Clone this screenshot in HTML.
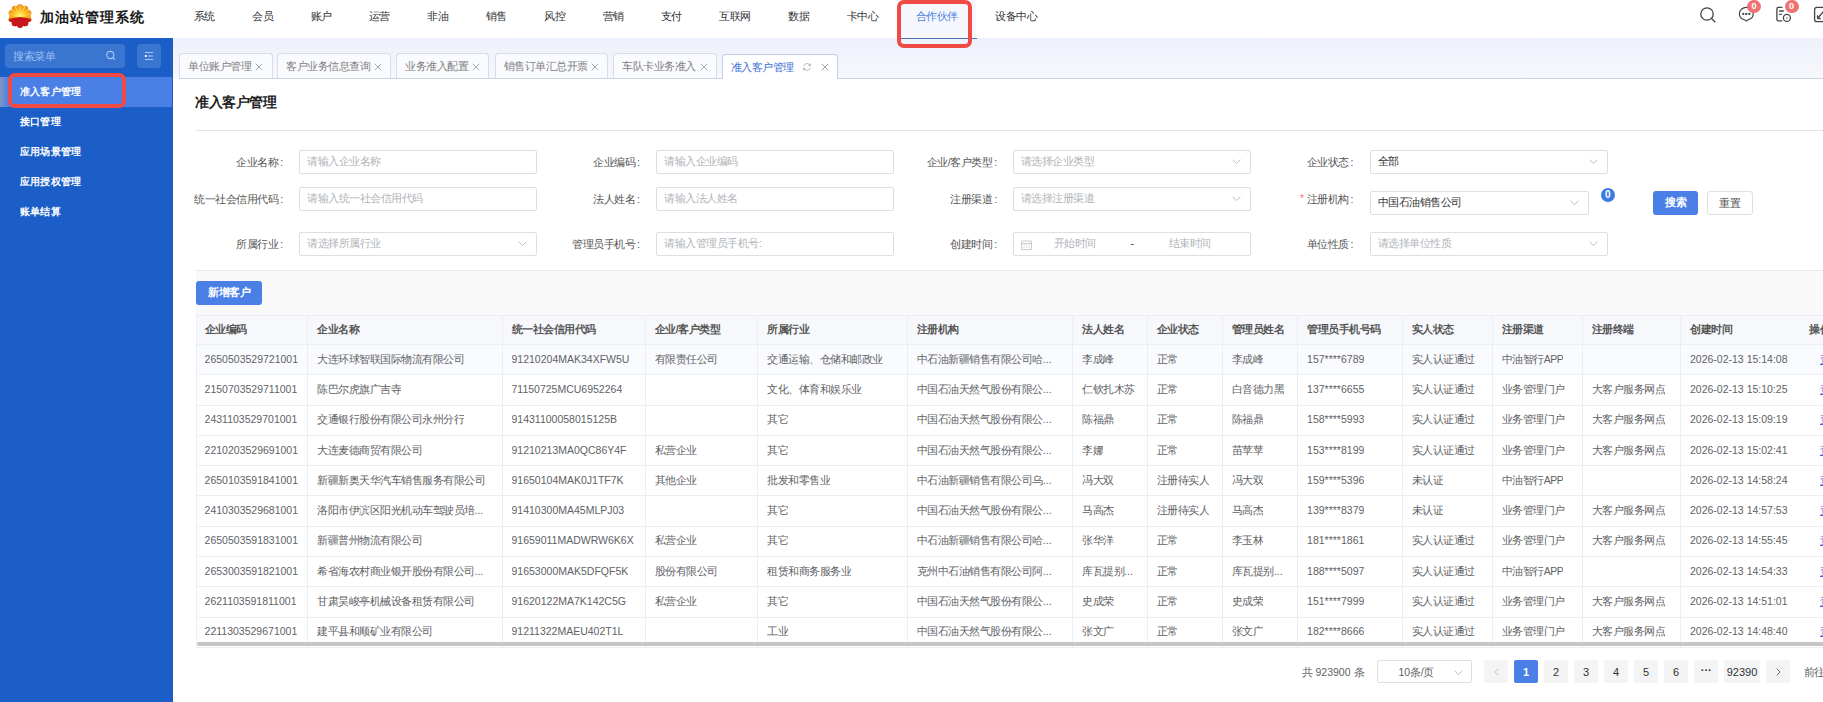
<!DOCTYPE html><html><head><meta charset="utf-8"><style>
*{box-sizing:border-box;margin:0;padding:0}
html,body{width:1823px;height:702px;overflow:hidden;background:#fff}
body{font-family:"Liberation Sans",sans-serif;font-size:10.5px;color:#606266;letter-spacing:-0.5px;position:relative}
.a{position:absolute;white-space:nowrap}
.num{letter-spacing:0}
#hdr{position:absolute;left:0;top:0;width:1823px;height:38px;background:#fff}
.nav{position:absolute;top:0;height:38px;line-height:32px;color:#303133;white-space:nowrap;text-align:center}
.nav.act{background:#f5f7fd;color:#4a7fdf}
#side{position:absolute;left:0;top:38px;width:173px;height:664px;background:#1b5ec7}
.mi{position:absolute;left:0;width:173px;height:30px;line-height:29px;padding-left:20px;color:#fff;font-weight:bold;white-space:nowrap;font-size:10px;letter-spacing:0.2px}
#tabs{position:absolute;left:173px;top:38px;width:1650px;height:41px;background:linear-gradient(#edf1fb,#f7f8fc)}
.tab{position:absolute;top:15px;height:26px;background:#fafbfe;border:1px solid #d8dde8;border-bottom:none;border-radius:4px 4px 0 0;line-height:24px;color:#808080;white-space:nowrap}
.tab.act{background:#fff;color:#3d73d8;border-color:#bfcde8}
.lbl{position:absolute;white-space:nowrap;color:#555;text-align:right;line-height:24px}
.inp{position:absolute;height:24px;border:1px solid #dcdfe6;border-radius:2px;background:#fff;line-height:21px;padding-left:7.3px;color:#b0b3b8;white-space:nowrap}
.inp.val{color:#333}
.chev{position:absolute;right:9px;top:8px;width:8px;height:5px}
.th{position:absolute;white-space:nowrap;font-weight:bold;color:#555;line-height:29px}
.td{position:absolute;white-space:nowrap;color:#606266;line-height:30px;overflow:hidden;text-overflow:ellipsis}
.pg{position:absolute;top:660px;width:24px;height:23px;background:#f4f4f5;border-radius:2px;text-align:center;line-height:24.5px;color:#303133;letter-spacing:0;font-size:11px}
</style></head><body>
<div id="hdr">
<svg class="a" style="left:8px;top:4px" width="24" height="24" viewBox="0 0 24 24">
<defs><clipPath id="lc"><circle cx="12" cy="12" r="9.2"/><circle cx="20.18" cy="14.66" r="3.3"/><circle cx="17.05" cy="18.96" r="3.3"/><circle cx="12.00" cy="20.60" r="3.3"/><circle cx="6.95" cy="18.96" r="3.3"/><circle cx="3.82" cy="14.66" r="3.3"/><circle cx="3.82" cy="9.34" r="3.3"/><circle cx="6.95" cy="5.04" r="3.3"/><circle cx="12.00" cy="3.40" r="3.3"/><circle cx="17.05" cy="5.04" r="3.3"/><circle cx="20.18" cy="9.34" r="3.3"/></clipPath>
<radialGradient id="lg" cx="12" cy="12.5" r="12" gradientUnits="userSpaceOnUse">
<stop offset="0" stop-color="#fffbe0"/><stop offset="0.2" stop-color="#ffe03a"/><stop offset="0.6" stop-color="#f8b21c"/><stop offset="1" stop-color="#f0901a"/></radialGradient></defs>
<g clip-path="url(#lc)">
<rect x="0" y="0" width="24" height="24" fill="url(#lg)"/>
<path d="M12 12.5 L12 0 M12 12.5 L6 0.5 M12 12.5 L18 0.5 M12 12.5 L1 4 M12 12.5 L23 4 M12 12.5 L0 9.5 M12 12.5 L24 9.5" stroke="#fff27a" stroke-width="0.8" opacity="0.7"/>
<path d="M0 15.5 Q12 10.5 24 15.5 L24 24 L0 24 Z" fill="#c9161d"/>
</g></svg>
<div class="a" style="left:40px;top:8px;font-size:14px;font-weight:bold;color:#1a1a1a;letter-spacing:1px;line-height:18px">加油站管理系统</div>
<div class="nav" style="left:175.00px;width:58.41px">系统</div>
<div class="nav" style="left:233.41px;width:58.41px">会员</div>
<div class="nav" style="left:291.82px;width:58.41px">账户</div>
<div class="nav" style="left:350.23px;width:58.41px">运营</div>
<div class="nav" style="left:408.64px;width:58.41px">非油</div>
<div class="nav" style="left:467.05px;width:58.41px">销售</div>
<div class="nav" style="left:525.46px;width:58.41px">风控</div>
<div class="nav" style="left:583.87px;width:58.41px">营销</div>
<div class="nav" style="left:642.28px;width:58.41px">支付</div>
<div class="nav" style="left:700.69px;width:68.91px">互联网</div>
<div class="nav" style="left:769.60px;width:58.41px">数据</div>
<div class="nav" style="left:828.01px;width:68.91px">卡中心</div>
<div class="nav act" style="left:896.92px;width:79.41px">合作伙伴</div>
<div class="nav" style="left:976.33px;width:79.41px">设备中心</div>
<svg class="a" style="left:1699px;top:5.5px" width="18" height="18" viewBox="0 0 18 18" fill="none" stroke="#444" stroke-width="1.3">
<circle cx="8" cy="8" r="6.2"/><path d="M12.5 12.5 L16.3 16.3"/></svg>
<svg class="a" style="left:1737px;top:5px" width="19" height="18" viewBox="0 0 19 18" fill="none" stroke="#444" stroke-width="1.2">
<path d="M9.3 16.1 L7.9 15 C4.8 14.3 2.4 11.8 2.4 8.8 C2.4 5.3 5.5 2.4 9.3 2.4 C13.1 2.4 16.2 5.3 16.2 8.8 C16.2 11.8 13.8 14.3 10.7 15 Z"/>
<circle cx="6.3" cy="8.9" r="0.55" fill="#444"/><circle cx="9.3" cy="8.9" r="0.55" fill="#444"/><circle cx="12.3" cy="8.9" r="0.55" fill="#444"/></svg>
<svg class="a" style="left:1774px;top:5px" width="18" height="18" viewBox="0 0 18 18" fill="none" stroke="#444" stroke-width="1.3">
<path d="M8.4 15.9 L4.3 15.9 Q2.9 15.9 2.9 14.5 L2.9 3.8 Q2.9 2.4 4.3 2.4 L8.4 2.4"/><path d="M5.2 6 L9.8 6 M5.2 9.3 L7.8 9.3"/>
<circle cx="12.9" cy="12.9" r="3.5"/><path d="M12.9 12.2 L12.9 13.6" stroke-width="1"/></svg>
<svg class="a" style="left:1812px;top:5px" width="18" height="18" viewBox="0 0 18 18" fill="none" stroke="#444" stroke-width="1.3">
<rect x="2.6" y="2.4" width="13" height="14.3" rx="2.2"/><path d="M5.5 13.5 L11.5 6.5 M5.5 13.5 L5.5 10.3 M5.5 13.5 L8.7 13.5"/></svg>
<div class="a" style="left:1747px;top:0px;width:14px;height:13px;border-radius:7px;background:#f07272;color:#fff;font-size:9px;line-height:13px;text-align:center;letter-spacing:0;font-weight:bold">0</div>
<div class="a" style="left:1784.5px;top:0px;width:14px;height:13px;border-radius:7px;background:#f07272;color:#fff;font-size:9px;line-height:13px;text-align:center;letter-spacing:0;font-weight:bold">0</div>
</div>
<div class="a" style="left:897px;top:-0.5px;width:75px;height:48px;border:4px solid #f04a45;border-radius:7px;z-index:20"></div>
<div id="side">
<div class="a" style="left:5px;top:6px;width:120px;height:24px;background:#3a76d0;border-radius:4px"></div>
<div class="a" style="left:13px;top:6px;line-height:24px;color:#9dc0f4">搜索菜单</div>
<svg class="a" style="left:104px;top:48px;position:fixed" width="13" height="13" viewBox="0 0 13 13" fill="none" stroke="#a9cbff" stroke-width="1.1">
<circle cx="6.3" cy="7" r="3.6"/><path d="M8.9 9.6 L10.9 11.6"/></svg>
<div class="a" style="left:137px;top:6px;width:24px;height:24px;background:#3a76d0;border-radius:4px"></div>
<svg class="a" style="left:144px;top:51px;position:fixed" width="10" height="10" viewBox="0 0 10 10" fill="none" stroke="#a9cbff" stroke-width="1">
<path d="M1 1.5 L9 1.5 M4 5 L9 5 M1 8.5 L9 8.5"/><rect x="0.8" y="4" width="2.2" height="2" fill="#d8e8ff" stroke="none"/></svg>
<div class="mi" style="top:39px;background:linear-gradient(90deg,#7f97bf 0px,#4a80e6 8px)">准入客户管理</div>
<div class="mi" style="top:69px">接口管理</div>
<div class="mi" style="top:99px">应用场景管理</div>
<div class="mi" style="top:129px">应用授权管理</div>
<div class="mi" style="top:159px">账单结算</div>
</div>
<div class="a" style="left:8px;top:73px;width:117.5px;height:35px;border:4px solid #f04a45;border-radius:7px;z-index:20"></div>
<div class="a" style="left:172px;top:38px;width:1px;height:664px;background:#2a5aa8"></div>
<div id="tabs"></div>
<div class="a" style="left:179px;top:78px;width:1644px;height:1px;background:#cbd3e4"></div>
<div class="a" style="left:897px;top:38px;width:80px;height:1px;background:#4a6fb8"></div>
<div class="tab" style="left:179px;width:93.6px;top:53px;height:25px"><span class="a" style="left:8px;top:0">单位账户管理</span><svg class="a" style="left:75.1px;top:9px" width="8" height="8" viewBox="0 0 8 8" stroke="#a0a0a0" stroke-width="0.9"><path d="M0.8 0.8 L7.2 7.2 M7.2 0.8 L0.8 7.2"/></svg></div>
<div class="tab" style="left:277.3px;width:114.1px;top:53px;height:25px"><span class="a" style="left:8px;top:0">客户业务信息查询</span><svg class="a" style="left:95.6px;top:9px" width="8" height="8" viewBox="0 0 8 8" stroke="#a0a0a0" stroke-width="0.9"><path d="M0.8 0.8 L7.2 7.2 M7.2 0.8 L0.8 7.2"/></svg></div>
<div class="tab" style="left:396.3px;width:93.2px;top:53px;height:25px"><span class="a" style="left:8px;top:0">业务准入配置</span><svg class="a" style="left:74.7px;top:9px" width="8" height="8" viewBox="0 0 8 8" stroke="#a0a0a0" stroke-width="0.9"><path d="M0.8 0.8 L7.2 7.2 M7.2 0.8 L0.8 7.2"/></svg></div>
<div class="tab" style="left:494.5px;width:113.8px;top:53px;height:25px"><span class="a" style="left:8px;top:0">销售订单汇总开票</span><svg class="a" style="left:95.3px;top:9px" width="8" height="8" viewBox="0 0 8 8" stroke="#a0a0a0" stroke-width="0.9"><path d="M0.8 0.8 L7.2 7.2 M7.2 0.8 L0.8 7.2"/></svg></div>
<div class="tab" style="left:613.4px;width:103.9px;top:53px;height:25px"><span class="a" style="left:8px;top:0">车队卡业务准入</span><svg class="a" style="left:85.4px;top:9px" width="8" height="8" viewBox="0 0 8 8" stroke="#a0a0a0" stroke-width="0.9"><path d="M0.8 0.8 L7.2 7.2 M7.2 0.8 L0.8 7.2"/></svg></div>
<div class="tab act" style="left:722.4px;width:115.5px;top:54px;height:25px"><span class="a" style="left:7.5px;top:-0.5px">准入客户管理</span><svg class="a" style="left:79px;top:7px" width="10" height="10" viewBox="0 0 10 10" fill="none" stroke="#b0b4ba" stroke-width="0.9"><path d="M8.3 3.5 A3.6 3.6 0 0 0 1.6 4.2 M1.7 6.5 A3.6 3.6 0 0 0 8.4 5.8"/><path d="M8.6 1.6 L8.4 3.7 L6.4 3.4 M1.4 8.4 L1.6 6.3 L3.6 6.6"/></svg><svg class="a" style="left:97.5px;top:8px" width="8" height="8" viewBox="0 0 8 8" stroke="#999" stroke-width="0.9"><path d="M0.8 0.8 L7.2 7.2 M7.2 0.8 L0.8 7.2"/></svg></div>
<div class="a" style="left:195px;top:94px;font-size:13.5px;font-weight:bold;color:#222;line-height:18px">准入客户管理</div>
<div class="a" style="left:196px;top:129.5px;width:1627px;height:1px;background:#e0e4ea"></div>
<div class="lbl" style="right:1540.4px;top:149.5px">企业名称<span style="margin-left:2px">:</span></div>
<div class="inp" style="left:299.2px;top:150.3px;width:238px;height:23.5px">请输入企业名称</div>
<div class="lbl" style="right:1183.5px;top:149.5px">企业编码<span style="margin-left:2px">:</span></div>
<div class="inp" style="left:656.2px;top:150.3px;width:238px;height:23.5px">请输入企业编码</div>
<div class="lbl" style="right:826.4px;top:149.5px">企业/客户类型<span style="margin-left:2px">:</span></div>
<div class="inp" style="left:1012.5px;top:150.3px;width:238px;height:23.5px">请选择企业类型<svg class="a" style="right:9px;top:8px" width="9" height="6" viewBox="0 0 9 6" fill="none" stroke="#b8bcc4" stroke-width="1"><path d="M0.6 0.8 L4.5 4.6 L8.4 0.8"/></svg></div>
<div class="lbl" style="right:470.0px;top:149.5px">企业状态<span style="margin-left:2px">:</span></div>
<div class="inp val" style="left:1369.5px;top:150.3px;width:238px;height:23.5px">全部<svg class="a" style="right:9px;top:8px" width="9" height="6" viewBox="0 0 9 6" fill="none" stroke="#b8bcc4" stroke-width="1"><path d="M0.6 0.8 L4.5 4.6 L8.4 0.8"/></svg></div>
<div class="lbl" style="right:1540.4px;top:186.5px">统一社会信用代码<span style="margin-left:2px">:</span></div>
<div class="inp" style="left:299.2px;top:187.3px;width:238px;height:23.5px">请输入统一社会信用代码</div>
<div class="lbl" style="right:1183.5px;top:186.5px">法人姓名<span style="margin-left:2px">:</span></div>
<div class="inp" style="left:656.2px;top:187.3px;width:238px;height:23.5px">请输入法人姓名</div>
<div class="lbl" style="right:826.4px;top:186.5px">注册渠道<span style="margin-left:2px">:</span></div>
<div class="inp" style="left:1012.5px;top:187.3px;width:238px;height:23.5px">请选择注册渠道<svg class="a" style="right:9px;top:8px" width="9" height="6" viewBox="0 0 9 6" fill="none" stroke="#b8bcc4" stroke-width="1"><path d="M0.6 0.8 L4.5 4.6 L8.4 0.8"/></svg></div>
<div class="lbl" style="right:470.0px;top:186.5px">注册机构<span style="margin-left:2px">:</span></div>
<div class="inp val" style="left:1369.5px;top:191.2px;width:219.5px;height:23.5px">中国石油销售公司<svg class="a" style="right:9px;top:8px" width="9" height="6" viewBox="0 0 9 6" fill="none" stroke="#b8bcc4" stroke-width="1"><path d="M0.6 0.8 L4.5 4.6 L8.4 0.8"/></svg></div>
<div class="a" style="left:1300px;top:193px;color:#f56c6c;font-size:10px;line-height:12px;letter-spacing:0">*</div>
<div class="a" style="left:1601px;top:188px;width:13.5px;height:13.5px;border-radius:7px;background:#3d7be0;color:#fff;font-size:10px;line-height:13.5px;text-align:center;letter-spacing:0;font-weight:bold">0</div>
<div class="a" style="left:1653px;top:191.3px;width:45px;height:23.5px;background:#4a80e6;border-radius:3px;color:#fff;text-align:center;line-height:23.5px;font-weight:bold">搜索</div>
<div class="a" style="left:1707.3px;top:191.3px;width:45.3px;height:23.5px;background:#fff;border:1px solid #dcdfe6;border-radius:3px;color:#555;text-align:center;line-height:22.5px">重置</div>
<div class="lbl" style="right:1540.4px;top:231.5px">所属行业<span style="margin-left:2px">:</span></div>
<div class="inp" style="left:299.2px;top:232.3px;width:238px;height:23.5px">请选择所属行业<svg class="a" style="right:9px;top:8px" width="9" height="6" viewBox="0 0 9 6" fill="none" stroke="#b8bcc4" stroke-width="1"><path d="M0.6 0.8 L4.5 4.6 L8.4 0.8"/></svg></div>
<div class="lbl" style="right:1183.5px;top:231.5px">管理员手机号<span style="margin-left:2px">:</span></div>
<div class="inp" style="left:656.2px;top:232.3px;width:238px;height:23.5px">请输入管理员手机号:</div>
<div class="lbl" style="right:826.4px;top:231.5px">创建时间<span style="margin-left:2px">:</span></div>
<div class="inp" style="left:1012.5px;top:232.3px;width:238px;height:23.5px"><svg class="a" style="left:7px;top:6.5px" width="11" height="10" viewBox="0 0 11 10" fill="none" stroke="#c0c4cc" stroke-width="0.9"><rect x="0.5" y="1" width="10" height="8.5" rx="0.5"/><path d="M0.5 3.5 L10.5 3.5 M2.5 5.3 L3.5 5.3 M5 5.3 L6 5.3 M7.5 5.3 L8.5 5.3 M2.5 7.3 L3.5 7.3 M5 7.3 L6 7.3 M7.5 7.3 L8.5 7.3"/></svg><span class="a" style="left:40px;top:0">开始时间</span><span class="a" style="left:117px;top:0;color:#333">-</span><span class="a" style="left:155px;top:0">结束时间</span></div>
<div class="lbl" style="right:470.0px;top:231.5px">单位性质<span style="margin-left:2px">:</span></div>
<div class="inp" style="left:1369.5px;top:232.3px;width:238px;height:23.5px">请选择单位性质<svg class="a" style="right:9px;top:8px" width="9" height="6" viewBox="0 0 9 6" fill="none" stroke="#b8bcc4" stroke-width="1"><path d="M0.6 0.8 L4.5 4.6 L8.4 0.8"/></svg></div>
<div class="a" style="left:196px;top:270px;width:1627px;height:45px;background:#f9f9f9;border-top:1px solid #e9e9e9"></div>
<div class="a" style="left:196.2px;top:281.2px;width:65.8px;height:23.6px;background:#4a80e6;border-radius:3px;color:#fff;text-align:center;line-height:23.6px;font-weight:bold">新增客户</div>
<div class="a" style="left:196.6px;top:315px;width:1627px;height:30px;background:#f6f8fc;border-top:1px solid #ebeef5;border-bottom:1px solid #ebeef5"></div>
<div class="a" style="left:196.6px;top:345px;width:1627px;height:28.68px;background:#fafbfe"></div>
<div class="a" style="left:196.6px;top:374.28px;width:1627px;height:1px;background:#ebeef5"></div>
<div class="a" style="left:196.6px;top:404.56px;width:1627px;height:1px;background:#ebeef5"></div>
<div class="a" style="left:196.6px;top:434.84px;width:1627px;height:1px;background:#ebeef5"></div>
<div class="a" style="left:196.6px;top:465.12px;width:1627px;height:1px;background:#ebeef5"></div>
<div class="a" style="left:196.6px;top:495.40px;width:1627px;height:1px;background:#ebeef5"></div>
<div class="a" style="left:196.6px;top:525.68px;width:1627px;height:1px;background:#ebeef5"></div>
<div class="a" style="left:196.6px;top:555.96px;width:1627px;height:1px;background:#ebeef5"></div>
<div class="a" style="left:196.6px;top:586.24px;width:1627px;height:1px;background:#ebeef5"></div>
<div class="a" style="left:196.6px;top:616.52px;width:1627px;height:1px;background:#ebeef5"></div>
<div class="a" style="left:196.6px;top:646.80px;width:1627px;height:1px;background:#ebeef5"></div>
<div class="a" style="left:196.1px;top:315px;width:1px;height:333px;background:#ebeef5"></div>
<div class="a" style="left:307.0px;top:315px;width:1px;height:333px;background:#ebeef5"></div>
<div class="a" style="left:501.5px;top:315px;width:1px;height:333px;background:#ebeef5"></div>
<div class="a" style="left:644.7px;top:315px;width:1px;height:333px;background:#ebeef5"></div>
<div class="a" style="left:757.0px;top:315px;width:1px;height:333px;background:#ebeef5"></div>
<div class="a" style="left:906.8px;top:315px;width:1px;height:333px;background:#ebeef5"></div>
<div class="a" style="left:1072.1px;top:315px;width:1px;height:333px;background:#ebeef5"></div>
<div class="a" style="left:1146.8px;top:315px;width:1px;height:333px;background:#ebeef5"></div>
<div class="a" style="left:1221.9px;top:315px;width:1px;height:333px;background:#ebeef5"></div>
<div class="a" style="left:1297.1px;top:315px;width:1px;height:333px;background:#ebeef5"></div>
<div class="a" style="left:1401.9px;top:315px;width:1px;height:333px;background:#ebeef5"></div>
<div class="a" style="left:1491.8px;top:315px;width:1px;height:333px;background:#ebeef5"></div>
<div class="a" style="left:1581.9px;top:315px;width:1px;height:333px;background:#ebeef5"></div>
<div class="a" style="left:1680.0px;top:315px;width:1px;height:333px;background:#ebeef5"></div>
<div class="th" style="left:204.6px;top:314.5px">企业编码</div>
<div class="th" style="left:317.0px;top:314.5px">企业名称</div>
<div class="th" style="left:511.5px;top:314.5px">统一社会信用代码</div>
<div class="th" style="left:654.7px;top:314.5px">企业/客户类型</div>
<div class="th" style="left:767.0px;top:314.5px">所属行业</div>
<div class="th" style="left:916.8px;top:314.5px">注册机构</div>
<div class="th" style="left:1082.1px;top:314.5px">法人姓名</div>
<div class="th" style="left:1156.8px;top:314.5px">企业状态</div>
<div class="th" style="left:1231.9px;top:314.5px">管理员姓名</div>
<div class="th" style="left:1307.1px;top:314.5px">管理员手机号码</div>
<div class="th" style="left:1411.9px;top:314.5px">实人状态</div>
<div class="th" style="left:1501.8px;top:314.5px">注册渠道</div>
<div class="th" style="left:1591.9px;top:314.5px">注册终端</div>
<div class="th" style="left:1690.0px;top:314.5px">创建时间</div>
<div class="th" style="left:1809.0px;top:314.5px">操作</div>
<div class="td num" style="left:204.6px;top:343.80px">2650503529721001</div>
<div class="td" style="left:317.0px;top:343.80px">大连环球智联国际物流有限公司</div>
<div class="td num" style="left:511.5px;top:343.80px">91210204MAK34XFW5U</div>
<div class="td" style="left:654.7px;top:343.80px">有限责任公司</div>
<div class="td" style="left:767.0px;top:343.80px">交通运输、仓储和邮政业</div>
<div class="td" style="left:916.8px;top:343.80px">中石油新疆销售有限公司哈<span class="num">...</span></div>
<div class="td" style="left:1082.1px;top:343.80px">李成峰</div>
<div class="td" style="left:1156.8px;top:343.80px">正常</div>
<div class="td" style="left:1231.9px;top:343.80px">李成峰</div>
<div class="td num" style="left:1307.1px;top:343.80px">157****6789</div>
<div class="td" style="left:1411.9px;top:343.80px">实人认证通过</div>
<div class="td" style="left:1501.8px;top:343.80px">中油智行APP</div>
<div class="td num" style="left:1690.0px;top:343.80px">2026-02-13 15:14:08</div>
<div class="td" style="left:1820px;top:343.80px;color:#4a5fd8;text-decoration:underline">查看</div>
<div class="td num" style="left:204.6px;top:374.08px">2150703529711001</div>
<div class="td" style="left:317.0px;top:374.08px">陈巴尔虎旗广吉寺</div>
<div class="td num" style="left:511.5px;top:374.08px">71150725MCU6952264</div>
<div class="td" style="left:767.0px;top:374.08px">文化、体育和娱乐业</div>
<div class="td" style="left:916.8px;top:374.08px">中国石油天然气股份有限公<span class="num">...</span></div>
<div class="td" style="left:1082.1px;top:374.08px">仁钦扎木苏</div>
<div class="td" style="left:1156.8px;top:374.08px">正常</div>
<div class="td" style="left:1231.9px;top:374.08px">白音德力黑</div>
<div class="td num" style="left:1307.1px;top:374.08px">137****6655</div>
<div class="td" style="left:1411.9px;top:374.08px">实人认证通过</div>
<div class="td" style="left:1501.8px;top:374.08px">业务管理门户</div>
<div class="td" style="left:1591.9px;top:374.08px">大客户服务网点</div>
<div class="td num" style="left:1690.0px;top:374.08px">2026-02-13 15:10:25</div>
<div class="td" style="left:1820px;top:374.08px;color:#4a5fd8;text-decoration:underline">查看</div>
<div class="td num" style="left:204.6px;top:404.36px">2431103529701001</div>
<div class="td" style="left:317.0px;top:404.36px">交通银行股份有限公司永州分行</div>
<div class="td num" style="left:511.5px;top:404.36px">91431100058015125B</div>
<div class="td" style="left:767.0px;top:404.36px">其它</div>
<div class="td" style="left:916.8px;top:404.36px">中国石油天然气股份有限公<span class="num">...</span></div>
<div class="td" style="left:1082.1px;top:404.36px">陈福鼎</div>
<div class="td" style="left:1156.8px;top:404.36px">正常</div>
<div class="td" style="left:1231.9px;top:404.36px">陈福鼎</div>
<div class="td num" style="left:1307.1px;top:404.36px">158****5993</div>
<div class="td" style="left:1411.9px;top:404.36px">实人认证通过</div>
<div class="td" style="left:1501.8px;top:404.36px">业务管理门户</div>
<div class="td" style="left:1591.9px;top:404.36px">大客户服务网点</div>
<div class="td num" style="left:1690.0px;top:404.36px">2026-02-13 15:09:19</div>
<div class="td" style="left:1820px;top:404.36px;color:#4a5fd8;text-decoration:underline">查看</div>
<div class="td num" style="left:204.6px;top:434.64px">2210203529691001</div>
<div class="td" style="left:317.0px;top:434.64px">大连麦德商贸有限公司</div>
<div class="td num" style="left:511.5px;top:434.64px">91210213MA0QC86Y4F</div>
<div class="td" style="left:654.7px;top:434.64px">私营企业</div>
<div class="td" style="left:767.0px;top:434.64px">其它</div>
<div class="td" style="left:916.8px;top:434.64px">中国石油天然气股份有限公<span class="num">...</span></div>
<div class="td" style="left:1082.1px;top:434.64px">李娜</div>
<div class="td" style="left:1156.8px;top:434.64px">正常</div>
<div class="td" style="left:1231.9px;top:434.64px">苗苹苹</div>
<div class="td num" style="left:1307.1px;top:434.64px">153****8199</div>
<div class="td" style="left:1411.9px;top:434.64px">实人认证通过</div>
<div class="td" style="left:1501.8px;top:434.64px">业务管理门户</div>
<div class="td" style="left:1591.9px;top:434.64px">大客户服务网点</div>
<div class="td num" style="left:1690.0px;top:434.64px">2026-02-13 15:02:41</div>
<div class="td" style="left:1820px;top:434.64px;color:#4a5fd8;text-decoration:underline">查看</div>
<div class="td num" style="left:204.6px;top:464.92px">2650103591841001</div>
<div class="td" style="left:317.0px;top:464.92px">新疆新奥天华汽车销售服务有限公司</div>
<div class="td num" style="left:511.5px;top:464.92px">91650104MAK0J1TF7K</div>
<div class="td" style="left:654.7px;top:464.92px">其他企业</div>
<div class="td" style="left:767.0px;top:464.92px">批发和零售业</div>
<div class="td" style="left:916.8px;top:464.92px">中石油新疆销售有限公司乌<span class="num">...</span></div>
<div class="td" style="left:1082.1px;top:464.92px">冯大双</div>
<div class="td" style="left:1156.8px;top:464.92px">注册待实人</div>
<div class="td" style="left:1231.9px;top:464.92px">冯大双</div>
<div class="td num" style="left:1307.1px;top:464.92px">159****5396</div>
<div class="td" style="left:1411.9px;top:464.92px">未认证</div>
<div class="td" style="left:1501.8px;top:464.92px">中油智行APP</div>
<div class="td num" style="left:1690.0px;top:464.92px">2026-02-13 14:58:24</div>
<div class="td" style="left:1820px;top:464.92px;color:#4a5fd8;text-decoration:underline">查看</div>
<div class="td num" style="left:204.6px;top:495.20px">2410303529681001</div>
<div class="td" style="left:317.0px;top:495.20px">洛阳市伊滨区阳光机动车驾驶员培<span class="num">...</span></div>
<div class="td num" style="left:511.5px;top:495.20px">91410300MA45MLPJ03</div>
<div class="td" style="left:767.0px;top:495.20px">其它</div>
<div class="td" style="left:916.8px;top:495.20px">中国石油天然气股份有限公<span class="num">...</span></div>
<div class="td" style="left:1082.1px;top:495.20px">马高杰</div>
<div class="td" style="left:1156.8px;top:495.20px">注册待实人</div>
<div class="td" style="left:1231.9px;top:495.20px">马高杰</div>
<div class="td num" style="left:1307.1px;top:495.20px">139****8379</div>
<div class="td" style="left:1411.9px;top:495.20px">未认证</div>
<div class="td" style="left:1501.8px;top:495.20px">业务管理门户</div>
<div class="td" style="left:1591.9px;top:495.20px">大客户服务网点</div>
<div class="td num" style="left:1690.0px;top:495.20px">2026-02-13 14:57:53</div>
<div class="td" style="left:1820px;top:495.20px;color:#4a5fd8;text-decoration:underline">查看</div>
<div class="td num" style="left:204.6px;top:525.48px">2650503591831001</div>
<div class="td" style="left:317.0px;top:525.48px">新疆普州物流有限公司</div>
<div class="td num" style="left:511.5px;top:525.48px">91659011MADWRW6K6X</div>
<div class="td" style="left:654.7px;top:525.48px">私营企业</div>
<div class="td" style="left:767.0px;top:525.48px">其它</div>
<div class="td" style="left:916.8px;top:525.48px">中石油新疆销售有限公司哈<span class="num">...</span></div>
<div class="td" style="left:1082.1px;top:525.48px">张华洋</div>
<div class="td" style="left:1156.8px;top:525.48px">正常</div>
<div class="td" style="left:1231.9px;top:525.48px">李玉林</div>
<div class="td num" style="left:1307.1px;top:525.48px">181****1861</div>
<div class="td" style="left:1411.9px;top:525.48px">实人认证通过</div>
<div class="td" style="left:1501.8px;top:525.48px">业务管理门户</div>
<div class="td" style="left:1591.9px;top:525.48px">大客户服务网点</div>
<div class="td num" style="left:1690.0px;top:525.48px">2026-02-13 14:55:45</div>
<div class="td" style="left:1820px;top:525.48px;color:#4a5fd8;text-decoration:underline">查看</div>
<div class="td num" style="left:204.6px;top:555.76px">2653003591821001</div>
<div class="td" style="left:317.0px;top:555.76px">希省海农村商业银开股份有限公司<span class="num">...</span></div>
<div class="td num" style="left:511.5px;top:555.76px">91653000MAK5DFQF5K</div>
<div class="td" style="left:654.7px;top:555.76px">股份有限公司</div>
<div class="td" style="left:767.0px;top:555.76px">租赁和商务服务业</div>
<div class="td" style="left:916.8px;top:555.76px">克州中石油销售有限公司阿<span class="num">...</span></div>
<div class="td" style="left:1082.1px;top:555.76px">库瓦提别<span class="num">...</span></div>
<div class="td" style="left:1156.8px;top:555.76px">正常</div>
<div class="td" style="left:1231.9px;top:555.76px">库瓦提别<span class="num">...</span></div>
<div class="td num" style="left:1307.1px;top:555.76px">188****5097</div>
<div class="td" style="left:1411.9px;top:555.76px">实人认证通过</div>
<div class="td" style="left:1501.8px;top:555.76px">中油智行APP</div>
<div class="td num" style="left:1690.0px;top:555.76px">2026-02-13 14:54:33</div>
<div class="td" style="left:1820px;top:555.76px;color:#4a5fd8;text-decoration:underline">查看</div>
<div class="td num" style="left:204.6px;top:586.04px">2621103591811001</div>
<div class="td" style="left:317.0px;top:586.04px">甘肃昊峻亭机械设备租赁有限公司</div>
<div class="td num" style="left:511.5px;top:586.04px">91620122MA7K142C5G</div>
<div class="td" style="left:654.7px;top:586.04px">私营企业</div>
<div class="td" style="left:767.0px;top:586.04px">其它</div>
<div class="td" style="left:916.8px;top:586.04px">中国石油天然气股份有限公<span class="num">...</span></div>
<div class="td" style="left:1082.1px;top:586.04px">史成荣</div>
<div class="td" style="left:1156.8px;top:586.04px">正常</div>
<div class="td" style="left:1231.9px;top:586.04px">史成荣</div>
<div class="td num" style="left:1307.1px;top:586.04px">151****7999</div>
<div class="td" style="left:1411.9px;top:586.04px">实人认证通过</div>
<div class="td" style="left:1501.8px;top:586.04px">业务管理门户</div>
<div class="td" style="left:1591.9px;top:586.04px">大客户服务网点</div>
<div class="td num" style="left:1690.0px;top:586.04px">2026-02-13 14:51:01</div>
<div class="td" style="left:1820px;top:586.04px;color:#4a5fd8;text-decoration:underline">查看</div>
<div class="td num" style="left:204.6px;top:616.32px">2211303529671001</div>
<div class="td" style="left:317.0px;top:616.32px">建平县和顺矿业有限公司</div>
<div class="td num" style="left:511.5px;top:616.32px">91211322MAEU402T1L</div>
<div class="td" style="left:767.0px;top:616.32px">工业</div>
<div class="td" style="left:916.8px;top:616.32px">中国石油天然气股份有限公<span class="num">...</span></div>
<div class="td" style="left:1082.1px;top:616.32px">张文广</div>
<div class="td" style="left:1156.8px;top:616.32px">正常</div>
<div class="td" style="left:1231.9px;top:616.32px">张文广</div>
<div class="td num" style="left:1307.1px;top:616.32px">182****8666</div>
<div class="td" style="left:1411.9px;top:616.32px">实人认证通过</div>
<div class="td" style="left:1501.8px;top:616.32px">业务管理门户</div>
<div class="td" style="left:1591.9px;top:616.32px">大客户服务网点</div>
<div class="td num" style="left:1690.0px;top:616.32px">2026-02-13 14:48:40</div>
<div class="td" style="left:1820px;top:616.32px;color:#4a5fd8;text-decoration:underline">查看</div>
<div class="a" style="left:197px;top:642.2px;width:1626px;height:3.8px;background:#c6c6c6;border-radius:2px 0 0 2px"></div>
<div class="a" style="left:196.6px;top:647px;width:1627px;height:1px;background:#ebeef5"></div>
<div class="a" style="left:1301.5px;top:665px;line-height:14px;color:#606266">共<span class="num" style="margin-left:3.5px;margin-right:3.5px">923900</span>条</div>
<div class="a" style="left:1376.5px;top:660.3px;width:95px;height:23.2px;border:1px solid #dcdfe6;border-radius:2px;line-height:22px;color:#606266"><span class="a" style="left:21px;top:0"><span class="num">10</span>条/页</span><svg class="a" style="right:8px;top:8.5px" width="9" height="6" viewBox="0 0 9 6" fill="none" stroke="#b8bcc4" stroke-width="1"><path d="M0.6 0.8 L4.5 4.6 L8.4 0.8"/></svg></div>
<div class="pg" style="left:1484px"><svg style="margin-top:8px" width="5" height="8" viewBox="0 0 5 8" fill="none" stroke="#c0c4cc" stroke-width="1"><path d="M4.3 0.6 L0.9 4 L4.3 7.4"/></svg></div>
<div class="pg" style="left:1514px;background:#4a80e6;color:#fff;font-weight:bold">1</div>
<div class="pg" style="left:1544px;">2</div>
<div class="pg" style="left:1574px;">3</div>
<div class="pg" style="left:1604px;">4</div>
<div class="pg" style="left:1634px;">5</div>
<div class="pg" style="left:1664px;">6</div>
<div class="pg" style="left:1694.3px;font-weight:bold;line-height:20px">···</div>
<div class="pg" style="left:1724.3px;width:35.5px">92390</div>
<div class="pg" style="left:1766px"><svg style="margin-top:8px" width="5" height="8" viewBox="0 0 5 8" fill="none" stroke="#606266" stroke-width="1"><path d="M0.7 0.6 L4.1 4 L0.7 7.4"/></svg></div>
<div class="a" style="left:1803.5px;top:665px;line-height:14px;color:#606266">前往</div>
</body></html>
